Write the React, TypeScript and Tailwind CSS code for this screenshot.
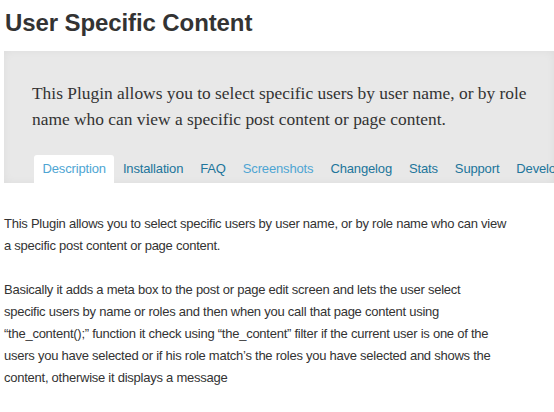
const tabs = [
  { label: "Description", active: true, light: true },
  { label: "Installation" },
  { label: "FAQ" },
  { label: "Screenshots", light: true },
  { label: "Changelog" },
  { label: "Stats" },
  { label: "Support" },
  { label: "Developers" },
];

const para1 = [
  "This Plugin allows you to select specific users by user name, or by role name who can view",
  "a specific post content or page content.",
];

const para2 = [
  "Basically it adds a meta box to the post or page edit screen and lets the user select",
  "specific users by name or roles and then when you call that page content using",
  "“the_content();” function it check using “the_content” filter if the current user is one of the",
  "users you have selected or if his role match’s the roles you have selected and shows the",
  "content, otherwise it displays a message",
];

export default function App() {
  return (
    <div className="h-[412px] w-[554px] overflow-hidden bg-white font-['Liberation_Sans',Arial,sans-serif] text-[#333]">
      <h1 className="mt-[8px] pl-[5px] text-[24px] font-bold leading-[29px] tracking-[-0.1px] text-[#333]">
        User Specific Content
      </h1>

      <div className="ml-[4px] mt-[14px] overflow-hidden bg-[#e8e8e8] shadow-[inset_0_0_8px_rgba(0,0,0,0.05)]">
        <p className="pl-[28px] pr-[20px] pt-[29px] font-['Liberation_Serif','Times_New_Roman',serif] text-[17.4px] leading-[26px] text-[#333]">
          This Plugin allows you to select specific users by user name, or by role name who can view a specific post content or page content.
        </p>
        <ul className="mt-[23px] flex whitespace-nowrap pl-[30px]">
          {tabs.map((t) => (
            <li
              key={t.label}
              className={
                "h-[28px] px-[8.5px] text-[13px] leading-[28px] tracking-[-0.15px] " +
                (t.active ? "rounded-t-[3px] bg-white " : "") +
                (t.light ? "text-[#4ea5d3]" : "text-[#21759b]")
              }
            >
              {t.label}
            </li>
          ))}
        </ul>
      </div>

      <div className="mt-[30px] pl-[4px] text-[13px] leading-[22px] tracking-[-0.25px] text-[#333]">
        <p className="mb-[22px]">
          {para1.map((l) => (
            <span key={l} className="block whitespace-nowrap">{l}</span>
          ))}
        </p>
        <p>
          {para2.map((l) => (
            <span key={l} className="block whitespace-nowrap">{l}</span>
          ))}
        </p>
      </div>
    </div>
  );
}
